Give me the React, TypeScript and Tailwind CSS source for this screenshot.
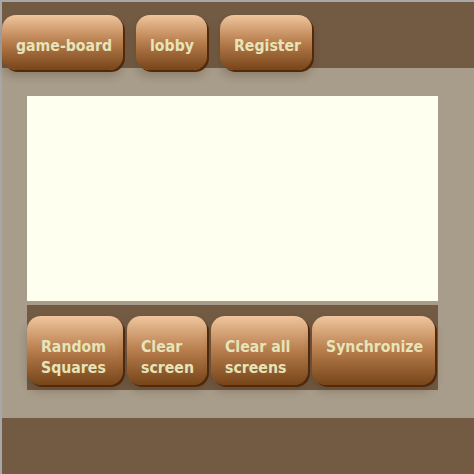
import React from 'react';

const btn =
  'relative z-10 flex shrink-0 items-start rounded-[14px] bg-gradient-to-b from-[#f0c69e] via-[#b77d4c] to-[#774519] text-left font-bold text-[#e6e4b9] shadow-[2px_2px_0_#53290a,0_6px_8px_rgba(60,40,20,0.25)]';

const navItems = [
  { label: 'game-board', w: 'w-[121px]' },
  { label: 'lobby', w: 'w-[71px]' },
  { label: 'Register', w: 'w-[92px]' },
];

const tools = [
  { label: 'Random Squares', w: 'w-[96px]' },
  { label: 'Clear screen', w: 'w-[80px]' },
  { label: 'Clear all screens', w: 'w-[97px]' },
  { label: 'Synchronize', w: 'w-[123px]' },
];

export default function App() {
  return (
    <div
      className="flex h-[474px] w-[474px] flex-col border-l-2 border-t-2 border-[#a7a7a7] bg-[#725a43] text-[15.7px] leading-[21px]"
      style={{ fontFamily: '"DejaVu Sans Condensed", "DejaVu Sans", sans-serif' }}
    >
      {/* nav */}
      <header className="flex h-[66px] shrink-0 gap-[13px] pt-[13px]">
        {navItems.map((item) => (
          <button key={item.label} className={`${btn} ${item.w} h-[55px] pl-[14px] pt-[20px]`}>
            {item.label}
          </button>
        ))}
      </header>

      {/* content */}
      <main className="flex h-[350px] shrink-0 flex-col bg-[#a89c8a] pl-[25px] pt-[28px]">
        <div className="h-[205px] w-[411px] bg-[#fffff0]" />
        <div className="mt-[4px] flex h-[85px] w-[411px] gap-[4px] bg-[#725a43] pt-[11px]">
          {tools.map((t) => (
            <button key={t.label} className={`${btn} ${t.w} h-[69px] pl-[14px] pr-[8px] pt-[20px]`}>
              <span className="block">{t.label}</span>
            </button>
          ))}
        </div>
      </main>

      <footer className="flex-1" />
    </div>
  );
}
